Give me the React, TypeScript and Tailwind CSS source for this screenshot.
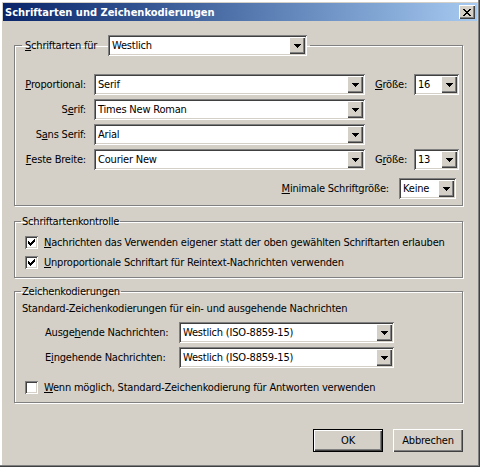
import type { ReactNode } from "react";

// Classic Win9x/2000 style bevels
const sunken =
  "shadow-[inset_1px_1px_0_#808080,inset_-1px_-1px_0_#ffffff,inset_2px_2px_0_#404040,inset_-2px_-2px_0_#d4d0c8]";
const raised =
  "shadow-[inset_1px_1px_0_#ffffff,inset_-1px_-1px_0_#404040,inset_-2px_-2px_0_#808080]";
const etched = "border border-[#808080] shadow-[inset_1px_1px_0_#ffffff,1px_1px_0_#ffffff]";

function Arrow() {
  return (
    <svg width="7" height="4" viewBox="0 0 7 4" shapeRendering="crispEdges">
      <rect x="0" y="0" width="7" height="1" fill="#000" />
      <rect x="1" y="1" width="5" height="1" fill="#000" />
      <rect x="2" y="2" width="3" height="1" fill="#000" />
      <rect x="3" y="3" width="1" height="1" fill="#000" />
    </svg>
  );
}

function Combo({ value, w }: { value: string; w: string }) {
  return (
    <div className={`${w} h-[21px] shrink-0 bg-white p-[2px] flex ${sunken}`}>
      <div className="flex-1 pl-[2px] flex items-center overflow-hidden whitespace-nowrap">{value}</div>
      <div className={`w-[16px] h-[17px] bg-[#d4d0c8] flex items-center justify-center ${raised}`}>
        <Arrow />
      </div>
    </div>
  );
}

function Check({ checked, children }: { checked?: boolean; children: ReactNode }) {
  return (
    <div className="flex items-center gap-[6px] h-[13px]">
      <div className={`w-[13px] h-[13px] shrink-0 bg-white p-[3px] ${sunken}`}>
        {checked && (
          <svg width="7" height="7" viewBox="0 0 7 7" shapeRendering="crispEdges">
            {[2, 3, 4, 3, 2, 1, 0].map((y, x) => (
              <rect key={x} x={x} y={y} width="1" height="3" fill="#000" />
            ))}
          </svg>
        )}
      </div>
      <span className="whitespace-nowrap">{children}</span>
    </div>
  );
}

function CloseGlyph() {
  const rows = ["XX....XX", ".XX..XX.", "..XXXX..", "...XX...", "..XXXX..", ".XX..XX.", "XX....XX"];
  return (
    <svg width="8" height="7" viewBox="0 0 8 7" shapeRendering="crispEdges">
      {rows.flatMap((r, y) =>
        r.split("").map((c, x) => (c === "X" ? <rect key={`${x}-${y}`} x={x} y={y} width="1" height="1" fill="#000" /> : null))
      )}
    </svg>
  );
}

function Btn({ label, primary }: { label: string; primary?: boolean }) {
  if (primary) {
    return (
      <div className="w-[70px] h-[23px] border border-black">
        <div className={`w-full h-full flex items-center justify-center ${raised}`}>{label}</div>
      </div>
    );
  }
  return <div className={`w-[70px] h-[23px] flex items-center justify-center ${raised}`}>{label}</div>;
}

// right-aligned label that never wraps
function RLabel({ children }: { children: ReactNode }) {
  return <span className="w-[64px] flex justify-end whitespace-nowrap">{children}</span>;
}

export default function App() {
  return (
    <div
      className="w-[480px] h-[467px] bg-[#d4d0c8] flex flex-col text-[11px] leading-[13px] tracking-[-0.2px] text-black shadow-[inset_-1px_-1px_0_#404040,inset_-2px_-2px_0_#808080,inset_2px_2px_0_#ffffff,inset_1px_1px_0_#d4d0c8]"
      style={{ fontFamily: '"DejaVu Sans Condensed", "Liberation Sans", sans-serif' }}
    >
      {/* title bar */}
      <div className="mt-[3px] mx-[3px] h-[18px] bg-linear-to-r from-[#0a246a] to-[#a6caf0] flex items-center justify-between pl-[2px] pr-[2px]">
        <span className="text-white font-bold tracking-normal">Schriftarten und Zeichenkodierungen</span>
        <div className={`w-[16px] h-[14px] bg-[#d4d0c8] flex items-center justify-center ${raised}`}>
          <CloseGlyph />
        </div>
      </div>

      <div className="pl-[14px] flex flex-col">
        {/* fonts */}
        <fieldset className={`mt-[14px] w-[449px] pt-[18px] pb-[6px] ${etched}`}>
          <legend className="ml-[7px] px-[3px] flex items-center">
            <span className="w-[83px] whitespace-nowrap">
              <u>S</u>chriftarten für
            </span>
            <Combo value="Westlich" w="w-[199px]" />
          </legend>
          <div className="pl-[7px] flex flex-col gap-[4px]">
            <div className="flex items-center">
              <RLabel>
                <u>P</u>roportional:
              </RLabel>
              <div className="ml-[8px]">
                <Combo value="Serif" w="w-[271px]" />
              </div>
              <span className="ml-[10px] w-[39px] whitespace-nowrap">
                <u>G</u>röße:
              </span>
              <Combo value="16" w="w-[45px]" />
            </div>
            <div className="flex items-center">
              <RLabel>
                S<u>e</u>rif:
              </RLabel>
              <div className="ml-[8px]">
                <Combo value="Times New Roman" w="w-[271px]" />
              </div>
            </div>
            <div className="flex items-center">
              <RLabel>
                S<u>a</u>ns Serif:
              </RLabel>
              <div className="ml-[8px]">
                <Combo value="Arial" w="w-[271px]" />
              </div>
            </div>
            <div className="flex items-center">
              <RLabel>
                <u>F</u>este Breite:
              </RLabel>
              <div className="ml-[8px]">
                <Combo value="Courier New" w="w-[271px]" />
              </div>
              <span className="ml-[10px] w-[39px] whitespace-nowrap">
                G<u>r</u>öße:
              </span>
              <Combo value="13" w="w-[45px]" />
            </div>
          </div>
          <div className="mt-[8px] flex items-center justify-end pr-[6px] gap-[10px]">
            <span className="whitespace-nowrap">
              <u>M</u>inimale Schriftgröße:
            </span>
            <Combo value="Keine" w="w-[57px]" />
          </div>
        </fieldset>

        {/* font control */}
        <fieldset className={`mt-[9px] w-[449px] pt-[8px] pb-[8px] ${etched}`}>
          <legend className="ml-[6px] px-[1px]">Schriftartenkontrolle</legend>
          <div className="pl-[10px] flex flex-col gap-[7px]">
            <Check checked>
              <u>N</u>achrichten das Verwenden eigener statt der oben gewählten Schriftarten erlauben
            </Check>
            <Check checked>
              <u>U</u>nproportionale Schriftart für Reintext-Nachrichten verwenden
            </Check>
          </div>
        </fieldset>

        {/* encodings */}
        <fieldset className={`mt-[7px] w-[449px] pt-[4px] pb-[8px] ${etched}`}>
          <legend className="ml-[6px] px-[1px]">Zeichenkodierungen</legend>
          <div className="pl-[7px]">Standard-Zeichenkodierungen für ein- und ausgehende Nachrichten</div>
          <div className="mt-[7px] pl-[30px] flex flex-col gap-[4px]">
            <div className="flex items-center">
              <span className="w-[134px] whitespace-nowrap">
                Ausge<u>h</u>ende Nachrichten:
              </span>
              <Combo value="Westlich (ISO-8859-15)" w="w-[215px]" />
            </div>
            <div className="flex items-center">
              <span className="w-[134px] whitespace-nowrap">
                E<u>i</u>ngehende Nachrichten:
              </span>
              <Combo value="Westlich (ISO-8859-15)" w="w-[215px]" />
            </div>
          </div>
          <div className="mt-[13px] pl-[10px]">
            <Check>
              <u>W</u>enn möglich, Standard-Zeichenkodierung für Antworten verwenden
            </Check>
          </div>
        </fieldset>

        <div className="mt-[26px] w-[449px] flex justify-end gap-[10px]">
          <Btn label="OK" primary />
          <Btn label="Abbrechen" />
        </div>
      </div>
    </div>
  );
}
